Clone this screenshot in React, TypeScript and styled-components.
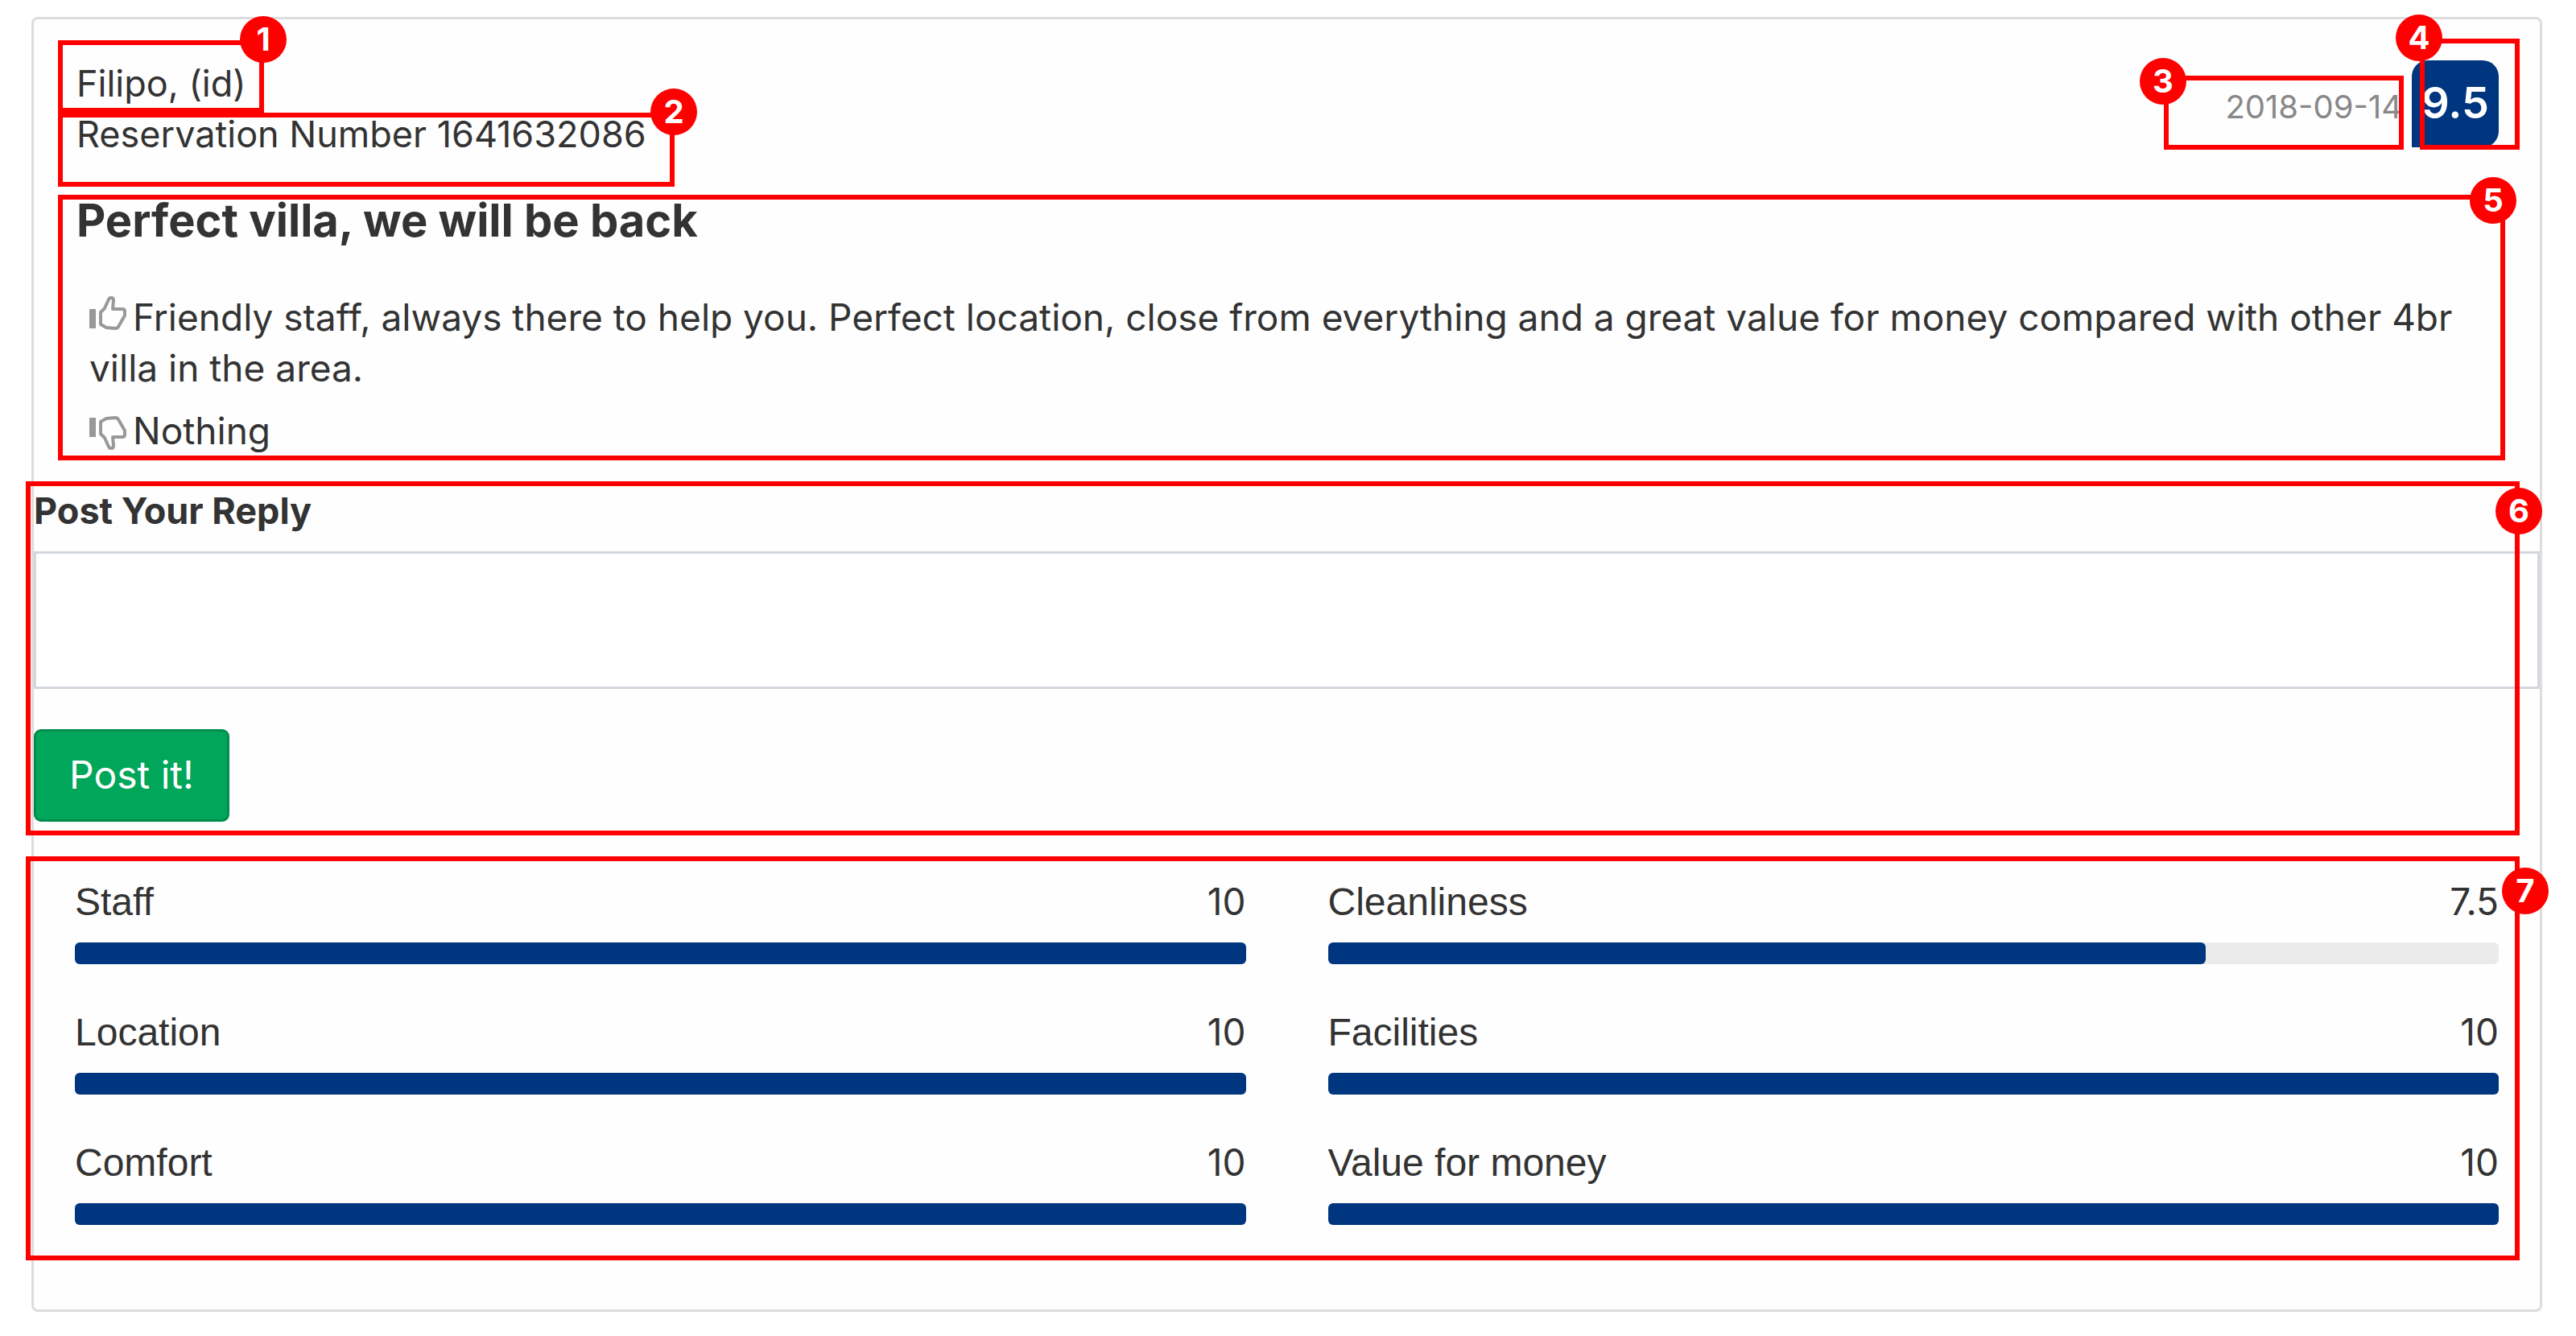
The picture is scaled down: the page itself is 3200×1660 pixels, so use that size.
import React from "react";
import styled, { createGlobalStyle, css } from "styled-components";

const GlobalStyle = createGlobalStyle`
  * { box-sizing: border-box; }
  body {
    margin: 0;
    background: #fff;
    color: #333;
    font-family: Inter, "Liberation Sans", sans-serif;
    font-size: 46px;
    line-height: 63px;
  }
`;

const Page = styled.main`
  position: relative;
  padding: 21px 42px 30px 39px;
`;

const Card = styled.article`
  padding: 48px 0 105px;
  border: 3px solid #ddd;
  border-radius: 8px;
  background: #fefefe;
`;

const Header = styled.header`
  display: flex;
  justify-content: space-between;
  align-items: flex-start;
  padding: 0 51px 0 53px;
`;

const Guest = styled.div`
  display: flex;
  flex-direction: column;
  font-size: 45px;
`;

const Meta = styled.div`
  display: flex;
  align-items: baseline;
  gap: 12px;
  padding-top: 3px;
`;

const ReviewDate = styled.time`
  color: #888;
  font-size: 40px;
`;

const Score = styled.strong`
  width: 108px;
  height: 108px;
  border-radius: 20px 20px 20px 0;
  background: #003580;
  color: #fff;
  font-size: 54px;
  font-weight: 600;
  line-height: 106px;
  text-align: center;
`;

const Title = styled.h2`
  margin: 42px 51px 55px 53px;
  font-size: 56px;
  font-weight: 700;
  line-height: 68px;
`;

const Comments = styled.div`
  display: flex;
  flex-direction: column;
  gap: 15px;
  padding: 0 51px 0 69px;
`;

const Comment = styled.p`
  margin: 0;
`;

const ThumbSvg = styled.svg<{ $down?: boolean }>`
  width: 46px;
  height: 44px;
  margin-right: 8px;
  vertical-align: ${(p) => (p.$down ? "-8px" : "baseline")};
`;

const ReplyForm = styled.form`
  display: flex;
  flex-direction: column;
  align-items: flex-start;
  margin-top: 36px;
`;

const ReplyLabel = styled.label`
  font-size: 45px;
  font-weight: 700;
`;

const ReplyBox = styled.textarea`
  display: block;
  width: 100%;
  height: 171px;
  margin: 19px 0 50px;
  padding: 18px 36px;
  border: 3px solid #d2d6de;
  border-radius: 0;
  background: #fff;
  color: inherit;
  font: inherit;
  resize: none;
`;

const PostButton = styled.button`
  padding: 22px 41px 24px;
  border: 3px solid #008d4c;
  border-radius: 9px;
  background: #00a65a;
  color: #fff;
  font-family: inherit;
  font-size: 48px;
  line-height: 63px;
`;

const Ratings = styled.section`
  display: grid;
  grid-template-columns: 1fr 1fr;
  gap: 54px 102px;
  margin-top: 69px;
  padding: 0 51px;
`;

const Rating = styled.div`
  display: flex;
  flex-direction: column;
  gap: 18px;
`;

const RatingText = styled.div`
  display: flex;
  justify-content: space-between;
  align-items: baseline;
  height: 63px;
  font-size: 48px;
  line-height: 60px;
`;

const RatingName = styled.span`
  font-family: "Liberation Sans", Arial, sans-serif;
`;

const RatingValue = styled.span`
  font-size: 46px;
`;

const Track = styled.div`
  height: 27px;
  border-radius: 6px;
  background: #ebebeb;
`;

const Fill = styled.div`
  height: 100%;
  border-radius: 6px;
  background: #003580;
`;

interface Box {
  top: number;
  height: number;
  left?: number;
  right?: number;
  width?: number;
}

const px = (v?: number) => (v === undefined ? "auto" : `${v}px`);

const Outline = styled.div<{ $box: Box }>`
  position: absolute;
  top: ${(p) => px(p.$box.top)};
  left: ${(p) => px(p.$box.left)};
  right: ${(p) => px(p.$box.right)};
  width: ${(p) => px(p.$box.width)};
  height: ${(p) => px(p.$box.height)};
  border: 6px solid #f00;
  pointer-events: none;
`;

const Marker = styled.span<{ $side: "left" | "right"; $out: number; $top: number }>`
  position: absolute;
  top: ${(p) => p.$top}px;
  ${(p) =>
    p.$side === "left"
      ? css`left: -${p.$out}px;`
      : css`right: -${p.$out}px;`}
  width: 58px;
  height: 58px;
  border-radius: 50%;
  background: #f00;
  color: #fff;
  font-size: 40px;
  font-weight: 700;
  line-height: 58px;
  text-align: center;
`;

const ratings = [
  { name: "Staff", value: 10 },
  { name: "Cleanliness", value: 7.5 },
  { name: "Location", value: 10 },
  { name: "Facilities", value: 10 },
  { name: "Comfort", value: 10 },
  { name: "Value for money", value: 10 },
];

const callouts: { box: Box; side: "left" | "right"; out: number; top: number }[] = [
  { box: { top: 50, left: 72, width: 256, height: 90 }, side: "right", out: 34, top: -36 },
  { box: { top: 140, left: 72, width: 766, height: 92 }, side: "right", out: 34, top: -36 },
  { box: { top: 94, right: 214, width: 298, height: 92 }, side: "left", out: 36, top: -28 },
  { box: { top: 48, right: 70, width: 124, height: 138 }, side: "left", out: 36, top: -36 },
  { box: { top: 242, left: 72, right: 88, height: 330 }, side: "right", out: 20, top: -28 },
  { box: { top: 598, left: 32, right: 70, height: 440 }, side: "right", out: 34, top: 2 },
  { box: { top: 1064, left: 32, right: 70, height: 502 }, side: "right", out: 42, top: 8 },
];

function Thumb({ down }: { down?: boolean }) {
  return (
    <ThumbSvg $down={down} viewBox="0 0 46 44" aria-hidden="true">
      <g transform={down ? "matrix(1 0 0 -1 0 44)" : undefined}>
        <rect x="0" y="17" width="8" height="24" fill="#999" />
        <path
          d="M14 21 L19 16 L24 5 Q25 3 27 3 Q30 3 30 6 L29 17 H41 Q44 17 44 20 V25 L36 39 Q35 41 32 41 L21 40 L14 36 Z"
          fill="none"
          stroke="#999"
          strokeWidth="4"
          strokeLinejoin="round"
        />
      </g>
    </ThumbSvg>
  );
}

export default function App() {
  return (
    <>
      <GlobalStyle />
      <Page>
        <Card>
          <Header>
            <Guest>
              <span>Filipo, (id)</span>
              <span>Reservation Number 1641632086</span>
            </Guest>
            <Meta>
              <ReviewDate dateTime="2018-09-14">2018-09-14</ReviewDate>
              <Score>9.5</Score>
            </Meta>
          </Header>
          <Title>Perfect villa, we will be back</Title>
          <Comments>
            <Comment>
              <Thumb />
              Friendly staff, always there to help you. Perfect location, close from everything and a
              great value for money compared with other 4br villa in the area.
            </Comment>
            <Comment>
              <Thumb down />
              Nothing
            </Comment>
          </Comments>
          <ReplyForm onSubmit={(e) => e.preventDefault()}>
            <ReplyLabel htmlFor="reply">Post Your Reply</ReplyLabel>
            <ReplyBox id="reply" />
            <PostButton type="submit">Post it!</PostButton>
          </ReplyForm>
          <Ratings>
            {ratings.map((r) => (
              <Rating key={r.name}>
                <RatingText>
                  <RatingName>{r.name}</RatingName>
                  <RatingValue>{r.value}</RatingValue>
                </RatingText>
                <Track>
                  <Fill style={{ width: `${r.value * 10}%` }} />
                </Track>
              </Rating>
            ))}
          </Ratings>
        </Card>
        {callouts.map((c, i) => (
          <Outline key={i} $box={c.box}>
            <Marker $side={c.side} $out={c.out} $top={c.top}>
              {i + 1}
            </Marker>
          </Outline>
        ))}
      </Page>
    </>
  );
}
